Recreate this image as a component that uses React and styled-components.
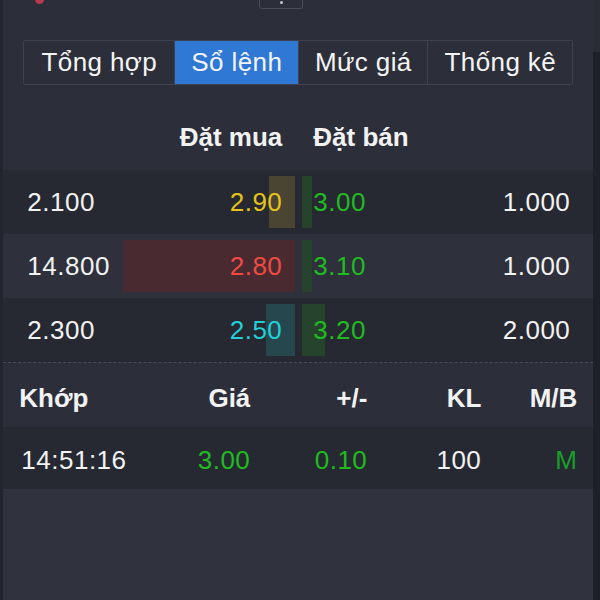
import styled, { createGlobalStyle } from "styled-components";

const Global = createGlobalStyle`
  html, body {
    margin: 0;
    padding: 0;
    background: #2c2f3a;
  }
  body {
    font-family: "Liberation Sans", Arial, sans-serif;
    color: #f2f2f2;
  }
`;

const Page = styled.div`
  display: flex;
  width: 600px;
  height: 600px;
  overflow: hidden;
`;

const LeftEdge = styled.div`
  width: 4px;
  background: #22252d;
`;

const Gutter = styled.div`
  width: 8px;
  background: #1d2028;
  display: flex;
  flex-direction: column;
`;

const Thumb = styled.div`
  height: 52px;
  background: #2a2d36;
`;

const Panel = styled.div`
  flex: 1;
  display: flex;
  flex-direction: column;
  background: #2c2f3a;
`;

const TopStrip = styled.div`
  height: 10px;
  display: flex;
  align-items: flex-start;
  overflow: hidden;
`;

const Dot = styled.div`
  width: 9px;
  height: 9px;
  margin: -5px 0 0 32px;
  border-radius: 50%;
  background: #b8394a;
`;

const MiniBox = styled.div`
  width: 44px;
  height: 14px;
  margin: -5px 0 0 215px;
  border: 1px solid #4a4e5a;
  border-radius: 3px;
  display: flex;
  justify-content: center;
  padding-top: 5px;
  box-sizing: border-box;
  &::after {
    content: "";
    width: 3px;
    height: 3px;
    border-radius: 50%;
    background: #c8c8c8;
  }
`;

const Tabs = styled.div`
  display: flex;
  margin: 30px 20px 0;
  height: 45px;
  border: 1px solid #3e4250;
  border-radius: 2px;
  box-sizing: border-box;
`;

const Tab = styled.div`
  width: ${(p) => p.$w}px;
  display: flex;
  align-items: center;
  justify-content: center;
  font-size: 26px;
  letter-spacing: 0.4px;
  color: #f4f4f4;
  background: ${(p) => (p.$active ? "#2f79d4" : "transparent")};
  border-left: ${(p) => (p.$first ? "none" : "1px solid #3e4250")};
  box-sizing: border-box;
`;

const BookGrid = styled.div`
  display: grid;
  grid-template-columns: 1fr 172px 172px 1fr;
  column-gap: 7px;
  align-items: center;
  padding: 0 23px 0 24px;
  font-size: 26px;
  letter-spacing: 0.5px;
`;

const BookHead = styled(BookGrid)`
  height: 85px;
  padding-top: 19px;
  box-sizing: border-box;
  font-weight: bold;
  letter-spacing: 0;
`;

const BookRow = styled(BookGrid)`
  height: 64px;
  background: ${(p) => (p.$alt ? "#2e313c" : "#262931")};
`;

const Vol = styled.div`
  text-align: ${(p) => p.$align};
  color: #f2f2f2;
`;

const PriceCell = styled.div`
  position: relative;
  height: 100%;
  display: flex;
  align-items: center;
  justify-content: ${(p) => (p.$side === "bid" ? "flex-end" : "flex-start")};
  padding: ${(p) => (p.$side === "bid" ? "0 13px 0 0" : "0 0 0 11px")};
  color: ${(p) => p.$color || "#f2f2f2"};
`;

const Bar = styled.div`
  position: absolute;
  top: 6px;
  bottom: 6px;
  ${(p) => (p.$side === "bid" ? "right: 0;" : "left: 0;")}
  background: ${(p) => p.$bg};
`;

const Label = styled.span`
  position: relative;
`;

const Divider = styled.div`
  border-top: 1px dashed #464a57;
`;

const MatchGrid = styled.div`
  display: grid;
  grid-template-columns: 140px 91px 117px 114px 96px;
  align-items: center;
  padding: 0 14px 0 16px;
  font-size: 26px;
  box-sizing: border-box;
`;

const MatchHead = styled(MatchGrid)`
  height: 64px;
  padding-top: 6px;
  font-weight: bold;
  background: #2c2f3a;
`;

const MatchRow = styled(MatchGrid)`
  height: 62px;
  padding-top: 4px;
  letter-spacing: 0.5px;
  background: #262931;
`;

const Cell = styled.div`
  text-align: ${(p) => p.$align || "right"};
  color: ${(p) => p.$color || "#f2f2f2"};
  padding-left: ${(p) => p.$pl || 0}px;
`;

const Rest = styled.div`
  flex: 1;
  background: #30333e;
`;

const GREEN = "#1fbb1f";

const tabs = [
  { label: "Tổng hợp", w: 150 },
  { label: "Sổ lệnh", w: 124, active: true },
  { label: "Mức giá", w: 129 },
  { label: "Thống kê", w: 145 },
];

const book = [
  { bv: "2.100", bp: "2.90", bc: "#e6c21c", bb: "#4a4532", bw: 26, ap: "3.00", aw: 10, av: "1.000" },
  { bv: "14.800", bp: "2.80", bc: "#f04a42", bb: "#4a2a31", bw: 172, ap: "3.10", aw: 10, av: "1.000", alt: true },
  { bv: "2.300", bp: "2.50", bc: "#22d0d6", bb: "#27474f", bw: 29, ap: "3.20", aw: 23, av: "2.000" },
];

export default function App() {
  return (
    <>
      <Global />
      <Page>
        <LeftEdge />
        <Panel>
          <TopStrip>
            <Dot />
            <MiniBox />
          </TopStrip>
          <Tabs>
            {tabs.map((t, i) => (
              <Tab key={t.label} $w={t.w} $active={t.active} $first={i === 0}>
                {t.label}
              </Tab>
            ))}
          </Tabs>

          <BookHead>
            <div />
            <PriceCell $side="bid">Đặt mua</PriceCell>
            <PriceCell $side="ask">Đặt bán</PriceCell>
            <div />
          </BookHead>
          {book.map((r) => (
            <BookRow key={r.bv} $alt={r.alt}>
              <Vol $align="left">{r.bv}</Vol>
              <PriceCell $side="bid" $color={r.bc}>
                <Bar $side="bid" $bg={r.bb} style={{ width: r.bw }} />
                <Label>{r.bp}</Label>
              </PriceCell>
              <PriceCell $side="ask" $color={GREEN}>
                <Bar $side="ask" $bg="#25432d" style={{ width: r.aw }} />
                <Label>{r.ap}</Label>
              </PriceCell>
              <Vol $align="right">{r.av}</Vol>
            </BookRow>
          ))}
          <Divider />

          <MatchHead>
            <Cell $align="left">Khớp</Cell>
            <Cell>Giá</Cell>
            <Cell>+/-</Cell>
            <Cell>KL</Cell>
            <Cell>M/B</Cell>
          </MatchHead>
          <MatchRow>
            <Cell $align="left" $pl={2}>14:51:16</Cell>
            <Cell $color={GREEN}>3.00</Cell>
            <Cell $color={GREEN}>0.10</Cell>
            <Cell>100</Cell>
            <Cell $color="#1a9e2a">M</Cell>
          </MatchRow>
          <Rest />
        </Panel>
        <Gutter>
          <Thumb />
        </Gutter>
      </Page>
    </>
  );
}
